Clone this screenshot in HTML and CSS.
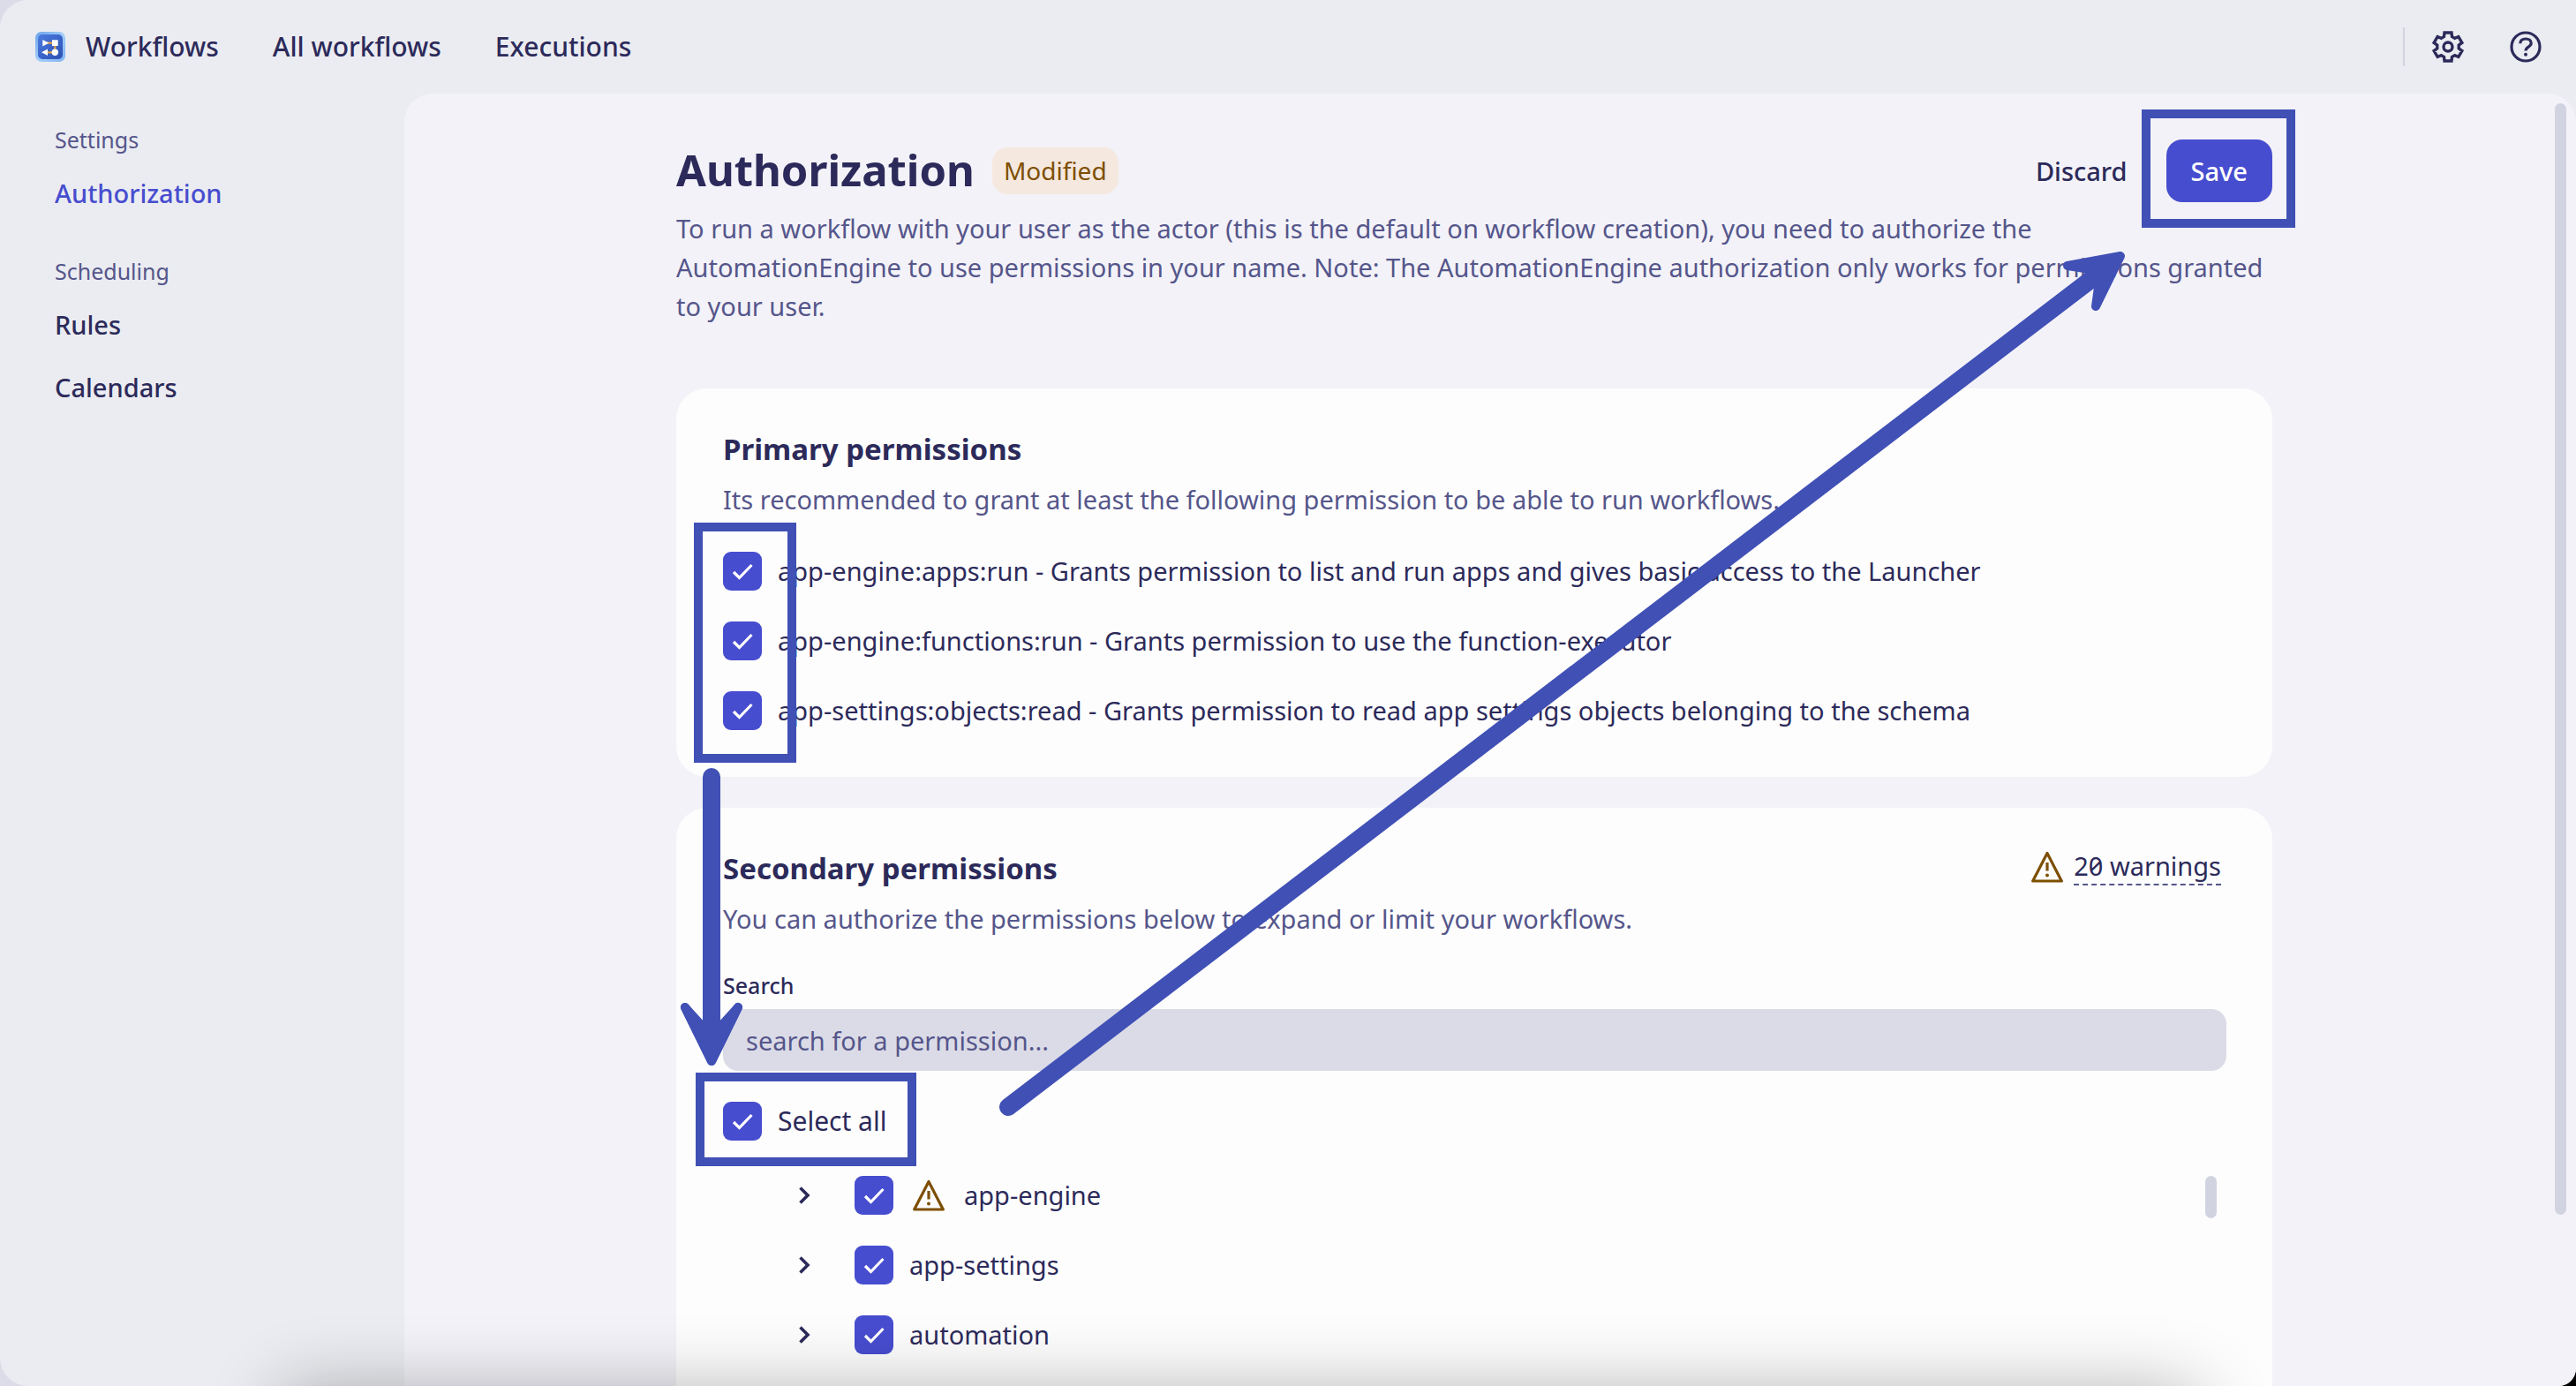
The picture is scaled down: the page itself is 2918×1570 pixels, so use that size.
FILE: index.html
```html
<!DOCTYPE html>
<html lang="en">
<head>
<meta charset="utf-8">
<meta name="viewport" content="width=device-width, initial-scale=1">
<title>Authorization - Workflows</title>
<link rel="stylesheet" href="styles.css">
</head>
<body>
<svg class="sprite" aria-hidden="true">
  <symbol id="warning" viewBox="0 0 36 36">
    <path d="M18 2.5 34.3 34H1.700z" fill="none" stroke="currentColor" stroke-width="3.2" stroke-linejoin="round"/>
    <path d="M18 13v9.500" stroke="currentColor" stroke-width="3.2"/>
    <circle cx="18" cy="27.500" r="2" fill="currentColor"/>
  </symbol>
  <symbol id="chevron" viewBox="0 0 44 44">
    <path d="m17.500 13.500 8.500 8.500-8.500 8.500" fill="none" stroke="currentColor" stroke-width="3.600"/>
  </symbol>
</svg>
<div class="window">
  <header class="topbar">
    <nav class="topnav" aria-label="Main">
      <a class="brand" href="#">
        <svg class="logo" viewBox="0 0 34 34" aria-hidden="true">
          <defs>
            <linearGradient id="rim" x1="0" y1="0" x2="1" y2="1"><stop offset="0" stop-color="#69a3ea"/><stop offset=".5" stop-color="#a5cdf8"/><stop offset="1" stop-color="#7fb2f2"/></linearGradient>
            <linearGradient id="core" x1="0" y1="0" x2="1" y2="1"><stop offset="0" stop-color="#4a7be0"/><stop offset="1" stop-color="#2d50b4"/></linearGradient>
          </defs>
          <rect width="34" height="34" rx="7" fill="url(#rim)"/>
          <rect x="3" y="3" width="28" height="28" rx="5" fill="url(#core)"/>
          <path d="M13 12.700h8M22.300 14v8M21 23.300h-8" stroke="#e0a044" stroke-width="2.200" fill="none"/>
          <path d="M8.300 9v7.400l7-3.700zM19 9.300h6.700v6.700H19zM14 19.600v7.400l-7-3.700z" fill="#fff"/>
          <circle cx="22.300" cy="23.300" r="3.700" fill="#fff"/>
        </svg>
        <span>Workflows</span>
      </a>
      <a href="#">All workflows</a>
      <a href="#">Executions</a>
    </nav>
    <div class="tools">
      <button class="tool" type="button" aria-label="Settings">
        <svg viewBox="-18 -18 36 36" fill="none" stroke="currentColor" stroke-width="3.400">
          <path d="M-4.500-11.500-4-16H4l.5 4.500 3.200 1.850 4.160-1.810 4 6.920-3.660 2.690v3.700l3.660 2.690-4 6.920-4.160-1.810-3.200 1.850L4 16h-8l-.5-4.500-3.200-1.850-4.160 1.810-4-6.920 3.660-2.690v-3.700l-3.660-2.690 4-6.920 4.160 1.810z"/>
          <circle r="5"/>
        </svg>
      </button>
      <button class="tool" type="button" aria-label="Help">
        <svg viewBox="0 0 36 36" fill="none" stroke="currentColor" stroke-width="3.200">
          <circle cx="18" cy="18" r="16"/>
          <path d="M11.800 14.200c0-3.400 2.600-5.200 6.200-5.200s6.200 2 6.200 5c0 4-6.200 4.200-6.200 8.400"/>
          <circle cx="18" cy="26.700" r="2" fill="currentColor" stroke="none"/>
        </svg>
      </button>
    </div>
  </header>

  <div class="body">
    <nav class="sidebar" aria-label="Settings">
      <section>
        <h2>Settings</h2>
        <a class="active" href="#" aria-current="page">Authorization</a>
      </section>
      <section>
        <h2>Scheduling</h2>
        <a href="#">Rules</a>
        <a href="#">Calendars</a>
      </section>
    </nav>

    <main class="page">
      <div class="column">
        <div class="titlebar">
          <h1>Authorization</h1>
          <span class="badge">Modified</span>
          <div class="actions">
            <button class="discard" type="button">Discard</button>
            <span class="marked marked-save"><button class="save" type="button">Save</button></span>
          </div>
        </div>
        <p class="intro">To run a workflow with your user as the actor (this is the default on workflow creation), you need to authorize the<br>AutomationEngine to use permissions in your name. Note: The AutomationEngine authorization only works for permissions granted to your user.</p>

        <section class="card">
          <h2>Primary permissions</h2>
          <p>Its recommended to grant at least the following permission to be able to run workflows.</p>
          <div class="checks marked marked-primary">
            <label class="check"><input type="checkbox" checked><span>app-engine:apps:run - Grants permission to list and run apps and gives basic access to the Launcher</span></label>
            <label class="check"><input type="checkbox" checked><span>app-engine:functions:run - Grants permission to use the function-executor</span></label>
            <label class="check"><input type="checkbox" checked><span>app-settings:objects:read - Grants permission to read app settings objects belonging to the schema</span></label>
          </div>
        </section>

        <section class="card">
          <div class="cardhead">
            <h2>Secondary permissions</h2>
            <div class="warnings">
              <svg class="icon" aria-hidden="true"><use href="#warning"/></svg>
              <a href="#">20 warnings</a>
            </div>
          </div>
          <p>You can authorize the permissions below to expand or limit your workflows.</p>
          <div class="search">
            <label for="search">Search</label>
            <input id="search" type="text" placeholder="search for a permission...">
          </div>
          <label class="check selectall marked marked-all"><input type="checkbox" checked><span>Select all</span></label>
          <div class="treebox">
            <ul class="tree">
              <li>
                <button class="expand" type="button" aria-label="Expand app-engine"><svg><use href="#chevron"/></svg></button>
                <label class="check flagged"><input type="checkbox" checked><svg class="icon" aria-hidden="true"><use href="#warning"/></svg><span>app-engine</span></label>
              </li>
              <li>
                <button class="expand" type="button" aria-label="Expand app-settings"><svg><use href="#chevron"/></svg></button>
                <label class="check"><input type="checkbox" checked><span>app-settings</span></label>
              </li>
              <li>
                <button class="expand" type="button" aria-label="Expand automation"><svg><use href="#chevron"/></svg></button>
                <label class="check"><input type="checkbox" checked><span>automation</span></label>
              </li>
            </ul>
            <div class="thumb"></div>
          </div>
        </section>

        <svg class="arrows" viewBox="766 158 1808 1412" aria-hidden="true">
          <path d="M806 880V1165" stroke-width="20" stroke-linecap="round"/>
          <path class="head" d="M776 1141 796 1163H816L836 1141 806 1202z"/>
          <path class="head" d="M776 1141 806 1202 836 1141 813 1172H799z"/>
          <path d="M1142 1254 2376 311" stroke-width="20" stroke-linecap="round"/>
          <path class="head" d="M2342 301 2402 290 2374 347 2378 318 2368 305z"/>
        </svg>
      </div>
      <div class="pagethumb"></div>
    </main>
  </div>
  <div class="dockshade"></div>
</div>
</body>
</html>
```
FILE: styles.css
```css
:root {
  --ink: #2c2a5a;
  --muted: #55568b;
  --accent: #474dcf;
  --mark: #4050b5;
  --warn: #7d4f00;
  --thumb: #d1d3e1;
}

*, *::before, *::after { box-sizing: border-box; }

html { background: linear-gradient(to right, #dcdce8 50%, #000 50%); }

body {
  margin: 0;
  font: 400 29px/44px "Noto Sans", "Open Sans", sans-serif;
  color: var(--ink);
}

h1, h2, p, ul { margin: 0; padding: 0; }
a { color: inherit; text-decoration: none; }
button { border: 0; padding: 0; background: none; font: inherit; color: inherit; cursor: pointer; }
.sprite { position: absolute; width: 0; height: 0; }

.window {
  position: relative;
  display: flex;
  flex-direction: column;
  height: 100vh;
  overflow: hidden;
  background: #ebecf1;
  border-radius: 32px 0 20px 32px;
}

/* Top bar */
.topbar {
  flex: none;
  display: flex;
  align-items: center;
  justify-content: space-between;
  height: 106px;
  padding: 0 39px 0 40px;
}
.topnav { display: flex; align-items: center; gap: 61px; font-size: 30px; font-weight: 500; }
.brand { display: flex; align-items: center; gap: 23px; }
.logo { width: 34px; height: 34px; }
.tools {
  display: flex;
  align-items: center;
  gap: 52px;
  height: 44px;
  padding-left: 31px;
  border-left: 2px solid var(--thumb);
}
.tool, .tool svg { display: block; width: 36px; height: 36px; }

.body { flex: 1; display: flex; min-height: 0; }

/* Sidebar */
.sidebar { flex: none; width: 458px; padding: 35px 62px; }
.sidebar section { margin-bottom: 36px; }
.sidebar h2 { margin-bottom: 8px; font-size: 25px; line-height: 34px; font-weight: 400; color: var(--muted); }
.sidebar a { display: block; line-height: 71px; font-weight: 500; }
.sidebar .active { color: var(--accent); }

/* Page */
.page {
  position: relative;
  flex: 1;
  min-width: 0;
  overflow: hidden;
  padding: 52px 36px 0 0;
  background: #f3f2f8;
  border-radius: 32px 32px 0 0;
}
.column { position: relative; max-width: 1808px; margin: 0 auto; }
.pagethumb {
  position: absolute;
  top: 11px;
  right: 11px;
  width: 13px;
  height: 86%;
  border-radius: 7px;
  background: var(--thumb);
}

.titlebar { display: flex; align-items: center; gap: 20px; height: 71px; }
h1 { padding-bottom: 3px; font-size: 49px; line-height: 64px; font-weight: 700; }
.badge {
  padding: 4px 13px 5px;
  border-radius: 17px;
  background: #f5e8df;
  color: var(--warn);
  font-size: 28px;
}
.actions { display: flex; align-items: center; gap: 44px; margin-left: auto; font-weight: 500; }
.save {
  display: block;
  height: 71px;
  padding: 0 28px;
  border-radius: 18px;
  background: var(--accent);
  color: #fff;
}
.intro { margin: 8px 0 71px; color: var(--muted); }

/* Cards */
.card {
  margin-bottom: 35px;
  padding: 49px 52px 53px 53px;
  border-radius: 35px;
  background: #fdfdfd;
}
.card h2 { font-size: 33px; line-height: 40px; font-weight: 700; }
.card p { margin: 15px 0 37px; color: var(--muted); }
.cardhead { display: flex; justify-content: space-between; height: 40px; }
.warnings { display: flex; align-items: center; gap: 12px; height: 36px; padding-right: 6px; }
.warnings a { height: 42px; line-height: 40px; border-bottom: 2px dashed var(--muted); font-variant-numeric: slashed-zero; }
.icon { flex: none; width: 36px; height: 36px; color: var(--warn); }

.checks { display: flex; flex-direction: column; gap: 35px; }
.check { display: flex; align-items: center; gap: 18px; }
.check input {
  appearance: none;
  flex: none;
  width: 44px;
  height: 44px;
  margin: 0;
  border-radius: 9px;
  background: var(--accent);
}
.check input:checked {
  background-image: url("data:image/svg+xml,%3Csvg xmlns='http://www.w3.org/2000/svg' viewBox='0 0 44 44'%3E%3Cpath d='M12 23l6.500 6.500 14-14.500' fill='none' stroke='%23fff' stroke-width='3.200'/%3E%3C/svg%3E");
}

.search { display: flex; flex-direction: column; gap: 11px; margin-bottom: 35px; }
.search label { font-size: 25px; line-height: 32px; font-weight: 500; }
.search input {
  width: 100%;
  height: 70px;
  padding: 0 26px;
  border: 0;
  border-radius: 17px;
  background: #dbdbe7;
  font: inherit;
  color: inherit;
}
.search input::placeholder { color: var(--muted); opacity: 1; }

.selectall { width: max-content; margin-bottom: 40px; font-size: 30px; }
.treebox { display: flex; justify-content: space-between; min-height: 400px; padding-right: 11px; }
.tree { display: flex; flex-direction: column; gap: 35px; padding-left: 70px; list-style: none; }
.tree li { display: flex; gap: 35px; }
.expand, .expand svg { display: block; width: 44px; height: 44px; }
.flagged .icon { margin: 0 4px; }
.thumb { width: 13px; height: 48px; border-radius: 7px; background: var(--thumb); }

/* Guide marks drawn over the page */
.marked { position: relative; }
.marked::after { content: ""; position: absolute; border: 10px solid var(--mark); pointer-events: none; }
.marked-save::after { inset: -34px -26px -29px -28px; }
.marked-primary::after { top: -33px; bottom: -37px; left: -33px; width: 116px; }
.marked-all::after { top: -33px; bottom: -29px; left: -31px; width: 250px; }
.arrows {
  position: absolute;
  top: 0;
  left: 0;
  width: 1808px;
  height: 1412px;
  overflow: visible;
  fill: none;
  stroke: var(--mark);
  pointer-events: none;
}
.arrows .head { fill: var(--mark); stroke-width: 10px; stroke-linejoin: round; }

/* Shade cast up by the dock */
.dockshade {
  position: absolute;
  left: 320px;
  right: 430px;
  top: 100%;
  height: 100px;
  margin-top: 8px;
  box-shadow: 0 0 84px rgba(0, 0, 0, .32);
  pointer-events: none;
}
```
